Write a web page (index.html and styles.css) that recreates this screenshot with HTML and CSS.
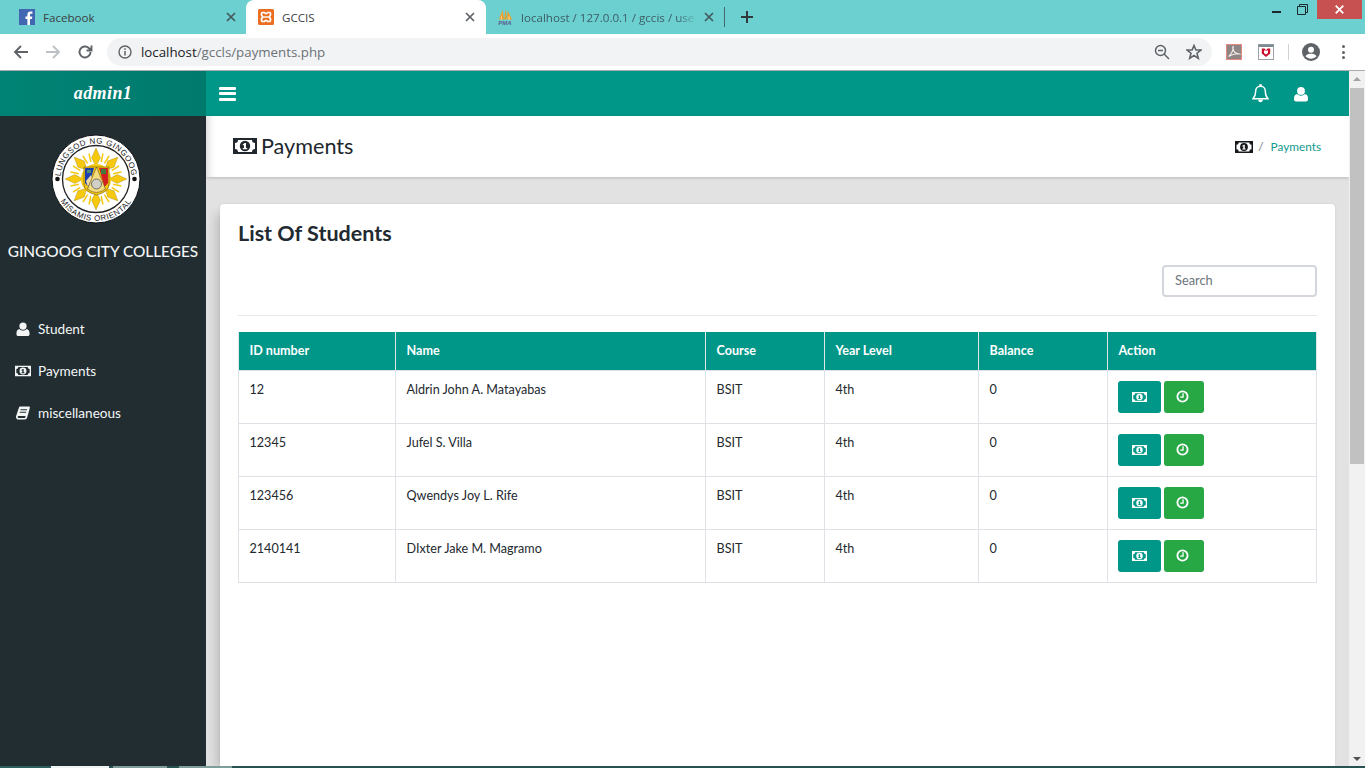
FILE: index.html
```html
<!DOCTYPE html>
<html lang="en">
<head>
<meta charset="utf-8">
<title>GCCIS</title>
<link rel="stylesheet" href="styles.css">
</head>
<body>
<svg class="defs" width="0" height="0" aria-hidden="true">
  <defs>
    <symbol id="i-money" viewBox="0 0 24 16"><path fill="currentColor" fill-rule="evenodd" d="M0 0H24V16H0ZM5 2H19A3 3 0 0 0 22 5V11A3 3 0 0 0 19 14H5A3 3 0 0 0 2 11V5A3 3 0 0 0 5 2ZM12 2.8a5.2 5.2 0 1 0 0 10.400a5.200 5.200 0 1 0 0-10.400ZM11.800 5L9.800 6.300V7.500L11 6.900V10H9.800V11.300H14.200V10H13V5Z"/></symbol>
    <symbol id="i-user" viewBox="0 0 14 15"><path fill="currentColor" d="M7 0.500a3.900 3.900 0 1 1 0 7.800a3.900 3.900 0 1 1 0-7.800ZM3.200 7.600C4.200 8.700 5.500 9.200 7 9.200S9.800 8.700 10.800 7.600C12.700 7.900 14 9.400 14 11.800V13C14 14 13.200 15 12 15H2C.8 15 0 14 0 13V11.800C0 9.400 1.300 7.900 3.200 7.600Z"/></symbol>
    <symbol id="i-book" viewBox="0 0 14 14"><path fill="currentColor" d="M4 .5H13C13.800.5 14 1.200 13.800 1.900L11.300 11C11 12.200 10.200 13.500 8.800 13.500H2.500C1 13.500 0 12.400 0 10.900C0 10.400.1 10 .3 9.500L3 1.500C3.200.9 3.500.5 4 .5ZM4.700 3.200L4.400 4.200H10.800L11.100 3.200ZM3.900 5.700L3.600 6.700H10L10.300 5.700ZM2.600 10C2 10 1.700 10.400 1.700 10.900C1.700 11.500 2.100 11.900 2.700 11.900H9C9.300 11.200 9.400 10.600 9.600 10Z"/></symbol>
    <symbol id="i-bell" viewBox="0 0 16 18"><path fill="none" stroke="currentColor" stroke-width="1.400" d="M8 2.200C5.200 2.200 3.400 4.300 3.400 7C3.400 10.800 2.400 12.400 .9 14H15.100C13.600 12.400 12.600 10.800 12.600 7C12.600 4.300 10.800 2.200 8 2.200Z"/><path fill="currentColor" d="M6.800.3h2.400v2h-2.400ZM5.800 14.800h4.400a2.200 2.600 0 0 1-4.400 0Z"/></symbol>
    <symbol id="i-clock" viewBox="0 0 14 14"><circle cx="7" cy="7" r="5.500" fill="none" stroke="currentColor" stroke-width="2"/><path fill="none" stroke="currentColor" stroke-width="1.400" d="M7.600 3.500V7.700H4.500"/></symbol>
    <g id="seal-ray">
      <path fill="#f6c80e" stroke="#8f7a12" stroke-width=".35" d="M45 14L49.500 24L45 32L40.500 24Z"/>
      <path fill="none" stroke="#f6c80e" stroke-width="1.500" d="M38 19.500L39.800 28M52 19.500L50.200 28"/>
    </g>
  </defs>
</svg>

<header class="chrome">
  <div class="tabstrip">
    <div class="tab tab-fb">
      <svg class="fav" viewBox="0 0 16 16"><rect width="16" height="16" fill="#4267b2"/><path fill="#fff" d="M11 16V10h2l.3-2.500H11V6c0-.8.300-1.200 1.200-1.200h1.200V2.600C13 2.500 12.300 2.500 11.500 2.500 9.600 2.500 8.400 3.600 8.400 5.700v1.800H6.500V10h1.900v6Z"/></svg>
      <span class="tab-label">Facebook</span>
      <svg class="close" viewBox="0 0 10 10"><path d="M1 1L9 9M9 1L1 9"/></svg>
    </div>
    <div class="tab tab-active">
      <svg class="fav" viewBox="0 0 16 16"><rect width="16" height="16" rx="1.500" fill="#ea6d20"/><path fill="none" stroke="#fff" stroke-width="1.600" d="M4 3.500H6.500C7 5 9 5 9.500 3.500H12C13 5 13 6.500 11 8C13 9.500 13 11 12 12.500H9.500C9 11 7 11 6.500 12.500H4C3 11 3 9.500 5 8C3 6.500 3 5 4 3.500Z"/><path stroke="#fff" stroke-width="1.400" d="M6 8H10"/></svg>
      <span class="tab-label">GCCIS</span>
      <svg class="close" viewBox="0 0 10 10"><path d="M1 1L9 9M9 1L1 9"/></svg>
    </div>
    <div class="tab tab-pma">
      <svg class="fav fav-pma" viewBox="0 0 16 16"><path fill="#f29a1f" d="M5.500 1L7 10.500H2ZM8.500 0L9.800 10.500H7.300ZM10.500 1.500L15 10.500H10.300Z"/><path fill="#fbd28a" d="M4.500 5L5.200 10.500H3.500ZM12 6L13 10.500H11Z"/><text class="pma-text" x="8" y="15.500">PMA</text></svg>
      <span class="tab-label tab-fade">localhost / 127.0.0.1 / gccis / use</span>
      <svg class="close" viewBox="0 0 10 10"><path d="M1 1L9 9M9 1L1 9"/></svg>
    </div>
    <span class="tab-sep"></span>
    <svg class="newtab" viewBox="0 0 12 12"><path d="M6 0V12M0 6H12"/></svg>
    <div class="winctl">
      <span class="win-min"></span>
      <svg class="win-max" viewBox="0 0 11 11"><path d="M2.500 2.500V.5H10.500V8.500H8.500M.5 2.500H8.500V10.500H.5Z"/></svg>
      <span class="win-close"><svg viewBox="0 0 9 9"><path d="M.7.7L8.300 8.300M8.300.7L.7 8.300"/></svg></span>
    </div>
  </div>
  <div class="toolbar">
    <svg class="nav-ic" viewBox="0 0 16 16"><path d="M15 8H2M8 2L2 8L8 14"/></svg>
    <svg class="nav-ic nav-off" viewBox="0 0 16 16"><path d="M1 8H14M8 2L14 8L8 14"/></svg>
    <svg class="nav-ic" viewBox="0 0 16 16"><path d="M13.500 8a5.500 5.500 0 1 1-1.700-4L14 6M14.500 1.500V6.500H9.500" /></svg>
    <div class="omnibox">
      <svg class="info" viewBox="0 0 14 14"><circle cx="7" cy="7" r="6" fill="none" stroke="#5f6368" stroke-width="1.400"/><path stroke="#5f6368" stroke-width="1.500" d="M7 6V10.500M7 3.300V4.800"/></svg>
      <span class="url"><span class="url-host">localhost</span>/gccls/payments.php</span>
      <svg class="omni-ic zoom-ic" viewBox="0 0 16 16"><circle cx="6.500" cy="6.500" r="5"/><path d="M10.300 10.300L15 15M4 6.500H9"/></svg>
      <svg class="omni-ic star-ic" viewBox="0 0 16 16"><path d="M8 1.500L9.900 6H14.900L11 9.200L12.300 14.300L8 11.500L3.700 14.300L5 9.200L1.100 6H6.100Z"/></svg>
    </div>
    <svg class="ext ext-pdf" viewBox="0 0 16 16"><rect x=".5" y=".5" width="15" height="15" fill="#8f8584" stroke="#e38a80"/><path fill="none" stroke="#efeaea" stroke-width="1.100" d="M2.500 12.500C5 11 7.500 6 7.300 3C7.200 1.800 6.300 2.500 7 5C8 8 10 10 13.500 10C12 9 7 10 2.500 12.500Z"/></svg>
    <svg class="ext ext-mc" viewBox="0 0 16 16"><rect x=".5" y=".5" width="15" height="15" fill="#fff" stroke="#9aa0a6"/><rect x=".5" y=".5" width="15" height="2.500" fill="#7d8a91"/><path fill="#c8102e" d="M3.800 4.500H6.500L8 6.200L9.500 4.500H12.200V9.500L8 13L3.800 9.500Z"/><path fill="#fff" d="M6 6.500H10V9L8 10.500L6 9Z"/></svg>
    <span class="tool-sep"></span>
    <svg class="avatar" viewBox="0 0 18 18"><circle cx="9" cy="9" r="9" fill="#5f6368"/><circle cx="9" cy="6.800" r="3" fill="#fff"/><path fill="#fff" d="M3.500 13.300C4.500 11.300 7 10.700 9 10.700S13.500 11.300 14.500 13.300C13 15 11 15.700 9 15.700S5 15 3.500 13.300Z"/></svg>
    <span class="kebab"><i></i><i></i><i></i></span>
  </div>
</header>

<div class="viewport">
  <div class="app">
    <div class="topbar">
      <div class="brand">admin1</div>
      <div class="topbar-main">
        <span class="burger"><i></i><i></i><i></i></span>
        <svg class="top-ic bell"><use href="#i-bell"/></svg>
        <svg class="top-ic usr"><use href="#i-user"/></svg>
      </div>
    </div>
    <div class="body-row">
      <aside class="sidebar">
        <svg class="seal" viewBox="0 0 90 90">
          <defs>
            <path id="seal-top" d="M9.500 45a35.500 35.500 0 0 1 71 0"/>
            <path id="seal-bot" d="M3 45a42 42 0 0 0 84 0"/>
          </defs>
          <circle cx="45" cy="45" r="44" fill="#fff" stroke="#0d1114" stroke-width="1"/>
          <circle cx="45" cy="45" r="33.500" fill="#fff" stroke="#222" stroke-width="1.300"/>
          <circle cx="6.500" cy="45" r="2.300" fill="#111"/>
          <circle cx="83.500" cy="45" r="2.300" fill="#111"/>
          <text class="seal-text"><textPath href="#seal-top" startOffset="50%">LUNGSOD NG GINGOOG</textPath></text>
          <text class="seal-text"><textPath href="#seal-bot" startOffset="50%">MISAMIS ORIENTAL</textPath></text>
          <use href="#seal-ray"/>
          <use href="#seal-ray" transform="rotate(45 45 45)"/>
          <use href="#seal-ray" transform="rotate(90 45 45)"/>
          <use href="#seal-ray" transform="rotate(135 45 45)"/>
          <use href="#seal-ray" transform="rotate(180 45 45)"/>
          <use href="#seal-ray" transform="rotate(225 45 45)"/>
          <use href="#seal-ray" transform="rotate(270 45 45)"/>
          <use href="#seal-ray" transform="rotate(315 45 45)"/>
          <circle cx="45" cy="45" r="15" fill="#f6c80e"/>
          <path fill="#f6c80e" stroke="#6e5a12" stroke-width=".6" d="M33 33H58V50Q58 58 45.500 61Q33 58 33 50Z"/>
          <path fill="#1c3fb0" d="M34 34H43L37.500 53L34 49Z"/>
          <path fill="#d31f1f" d="M48 34H57V49L53.500 53Z"/>
          <path fill="#efd9a6" d="M35 47L40 41L41 44L37 53Z"/>
          <path fill="#3f7a3d" d="M50 35h5v5h-5Z"/>
          <path fill="#4f8a72" d="M36 36h4v3h-4Z"/>
          <path fill="#f4dd7c" stroke="#44391a" stroke-width=".5" d="M45.500 33L54.500 55Q45.500 62 36.500 55Z"/>
          <circle cx="45.500" cy="50" r="5" fill="#d2cfc6" stroke="#555" stroke-width=".8"/>
        </svg>
        <div class="college">GINGOOG CITY COLLEGES</div>
        <nav class="side-nav">
          <a class="side-link"><svg class="side-ic"><use href="#i-user"/></svg>Student</a>
          <a class="side-link"><svg class="side-ic"><use href="#i-money"/></svg>Payments</a>
          <a class="side-link"><svg class="side-ic"><use href="#i-book"/></svg>miscellaneous</a>
        </nav>
      </aside>
      <main class="content">
        <div class="page-head">
          <h1 class="page-title"><svg class="title-ic"><use href="#i-money"/></svg>Payments</h1>
          <div class="crumbs">
            <svg class="crumb-ic"><use href="#i-money"/></svg>
            <span class="crumb-sep">/</span>
            <a class="crumb-link">Payments</a>
          </div>
        </div>
        <section class="card">
          <h2 class="card-title">List Of Students</h2>
          <div class="search-row"><input class="search" type="text" placeholder="Search"></div>
          <hr class="rule">
          <table class="students">
            <colgroup>
              <col class="c1"><col class="c2"><col class="c3"><col class="c4"><col class="c5"><col class="c6">
            </colgroup>
            <thead>
              <tr><th>ID number</th><th>Name</th><th>Course</th><th>Year Level</th><th>Balance</th><th>Action</th></tr>
            </thead>
            <tbody>
              <tr><td>12</td><td>Aldrin John A. Matayabas</td><td>BSIT</td><td>4th</td><td>0</td><td><span class="btn btn-pay"><svg class="btn-ic-m"><use href="#i-money"/></svg></span><span class="btn btn-time"><svg class="btn-ic-c"><use href="#i-clock"/></svg></span></td></tr>
              <tr><td>12345</td><td>Jufel S. Villa</td><td>BSIT</td><td>4th</td><td>0</td><td><span class="btn btn-pay"><svg class="btn-ic-m"><use href="#i-money"/></svg></span><span class="btn btn-time"><svg class="btn-ic-c"><use href="#i-clock"/></svg></span></td></tr>
              <tr><td>123456</td><td>Qwendys Joy L. Rife</td><td>BSIT</td><td>4th</td><td>0</td><td><span class="btn btn-pay"><svg class="btn-ic-m"><use href="#i-money"/></svg></span><span class="btn btn-time"><svg class="btn-ic-c"><use href="#i-clock"/></svg></span></td></tr>
              <tr><td>2140141</td><td>DIxter Jake M. Magramo</td><td>BSIT</td><td>4th</td><td>0</td><td><span class="btn btn-pay"><svg class="btn-ic-m"><use href="#i-money"/></svg></span><span class="btn btn-time"><svg class="btn-ic-c"><use href="#i-clock"/></svg></span></td></tr>
            </tbody>
          </table>
        </section>
      </main>
    </div>
  </div>
  <div class="scrollbar">
    <span class="arrow-up"></span>
    <span class="thumb"></span>
    <span class="arrow-down"></span>
  </div>
</div>

<footer class="taskstrip">
  <i class="ts ts-a"></i><i class="ts ts-b"></i><i class="ts ts-c"></i><i class="ts ts-d"></i>
</footer>
</body>
</html>
```

FILE: styles.css
```css
* { box-sizing: border-box; }
html, body { margin: 0; height: 100%; overflow: hidden; }
body {
  width: 1365px;
  height: 768px;
  display: flex;
  flex-direction: column;
  font-family: Lato, "Liberation Sans", sans-serif;
  color: #212529;
  background: #fff;
}
.defs { position: absolute; }

/* browser chrome */
.chrome { flex: none; height: 71px; border-bottom: 1px solid #a9adb0; font-family: "Open Sans", "Noto Sans", sans-serif; }
.tabstrip { height: 34px; background: #6bd0cf; display: flex; align-items: center; }
.tab { height: 34px; display: flex; align-items: center; position: relative; flex: none; }
.tab-fb { width: 246px; padding: 0 10px 0 19px; }
.tab-active { width: 240px; background: #fff; border-radius: 8px 8px 0 0; padding: 0 11px 0 12px; }
.tab-pma { width: 238px; padding: 0 10px 0 11px; }
.fav { width: 16px; height: 16px; flex: none; margin-right: 8px; }
.fav-pma { margin-right: 8px; }
.pma-text { font: italic 700 6px "Liberation Sans", sans-serif; fill: #5a5f8f; text-anchor: middle; }
.tab-label { font-size: 11.600px; color: #3c4043; flex: 1; white-space: nowrap; min-width: 0; }
.tab-fade { color: #3f5d66; -webkit-mask-image: linear-gradient(90deg, #000 88%, transparent); mask-image: linear-gradient(90deg, #000 88%, transparent); }
.close { width: 10px; height: 10px; flex: none; margin-left: 6px; }
.close path { stroke: #45595c; stroke-width: 1.700; fill: none; }
.tab-active .close path { stroke: #5f6368; }
.tab-sep { width: 1px; height: 20px; background: #44696b; flex: none; }
.newtab { width: 12px; height: 12px; margin-left: 16px; flex: none; }
.newtab path { stroke: #2f3a3c; stroke-width: 2; fill: none; }
.winctl { margin-left: auto; align-self: flex-start; display: flex; align-items: flex-start; }
.win-min { width: 9px; height: 2px; background: #1d2a2c; margin: 11px 16px 0 0; }
.win-max { width: 11px; height: 11px; margin: 4px 9px 0 0; overflow: visible; }
.win-max path { fill: none; stroke: #1d2a2c; stroke-width: 1; }
.win-close { width: 45px; height: 19px; background: #c75050; display: flex; align-items: center; justify-content: center; margin-right: 3px; }
.win-close svg { width: 9px; height: 9px; }
.win-close path { stroke: #fff; stroke-width: 1.700; fill: none; }

.toolbar { height: 36px; background: #fff; display: flex; align-items: center; }
.nav-ic { width: 16px; height: 16px; margin-left: 13px; flex: none; }
.nav-ic + .nav-ic { margin-left: 16px; }
.nav-ic path { fill: none; stroke: #5f6368; stroke-width: 1.900; }
.nav-off path { stroke: #bdc1c6; }
.omnibox { margin-left: 14px; width: 1105px; height: 28px; border-radius: 14px; background: #f1f3f4; display: flex; align-items: center; padding: 0 10px 0 11px; flex: none; }
.info { width: 14px; height: 14px; flex: none; margin-right: 9px; }
.url { font-size: 13.300px; color: #6c7278; flex: 1; white-space: nowrap; }
.url-host { color: #202124; }
.omni-ic { width: 16px; height: 16px; flex: none; }
.omni-ic circle, .omni-ic path { fill: none; stroke: #5f6368; stroke-width: 1.500; }
.zoom-ic { margin-right: 16px; }
.star-ic path { stroke-width: 1.600; }
.ext { width: 16px; height: 16px; flex: none; }
.ext-pdf { margin-left: 14px; }
.ext-mc { margin-left: 16px; }
.tool-sep { width: 1px; height: 16px; background: #d0d3d6; margin: 0 13px 0 14px; flex: none; }
.avatar { width: 18px; height: 18px; flex: none; }
.kebab { display: flex; flex-direction: column; gap: 2.500px; margin-left: 22px; flex: none; }
.kebab i { width: 3px; height: 3px; border-radius: 50%; background: #5f6368; display: block; }

/* page */
.viewport { flex: 1; min-height: 0; display: flex; }
.app { flex: 1; min-width: 0; display: flex; flex-direction: column; }
.topbar { flex: none; height: 45px; display: flex; background: #009688; color: #fff; }
.brand { width: 206px; flex: none; background: linear-gradient(90deg, #008374, #007a6d); display: flex; align-items: center; justify-content: center; font-family: "Liberation Serif", serif; font-style: italic; font-weight: 700; font-size: 18px; letter-spacing: .4px; }
.topbar-main { flex: 1; display: flex; align-items: center; padding: 0 41px 0 13px; }
.burger { display: flex; flex-direction: column; gap: 2.500px; width: 17px; margin-right: auto; }
.burger i { display: block; height: 3px; background: #fff; border-radius: 1px; }
.top-ic { display: block; color: #fff; }
.bell { width: 17px; height: 19px; }
.usr { width: 14px; height: 16px; margin-left: 25px; }

.body-row { flex: 1; min-height: 0; display: flex; }
.sidebar { width: 206px; flex: none; background: #222d32; color: #fff; display: flex; flex-direction: column; align-items: stretch; padding-top: 18px; }
.seal { width: 90px; height: 90px; align-self: center; margin-right: 14px; flex: none; display: block; }
.seal-text { font-family: "Liberation Sans", sans-serif; font-size: 8px; letter-spacing: .6px; fill: #222; text-anchor: middle; }
.college { font-size: 15.400px; font-weight: 500; text-align: center; margin-top: 17px; color: #f2f4f4; white-space: nowrap; line-height: 20px; }
.side-nav { margin-top: 58px; display: flex; flex-direction: column; gap: 22px; }
.side-link { display: flex; align-items: center; height: 20px; padding-left: 15px; font-size: 13.600px; color: #f4f6f6; }
.side-ic { width: 16px; height: 14px; margin-right: 7px; color: #f4f6f6; flex: none; }

.content { flex: 1; min-width: 0; background: #e2e2e2; display: flex; flex-direction: column; }
.page-head { flex: none; height: 61px; background: #fff; box-shadow: 0 1px 3px rgba(0,0,0,.18), inset 10px 0 8px -8px #d4d4d4; display: flex; align-items: center; justify-content: space-between; padding: 0 28px 2px 27px; position: relative; }
.page-title { margin: 0; font-size: 21.600px; font-weight: 400; color: #20272d; display: flex; align-items: center; line-height: 26px; }
.title-ic { width: 24px; height: 16px; margin-right: 4px; color: #20272d; }
.crumbs { display: flex; align-items: center; font-size: 11.800px; padding-top: 2px; }
.crumb-ic { width: 18px; height: 12px; color: #15191c; margin-right: 5px; }
.crumb-sep { color: #6c757d; margin-right: 7px; }
.crumb-link { color: #0f9a8e; }
.card { flex: 1; min-height: 0; margin: 27px 14px 0 14px; background: #fff; border-radius: 4px 4px 0 0; padding: 15px 18px 0; box-shadow: 0 0 3px rgba(0,0,0,.08), -8px 6px 10px -4px rgba(0,0,0,.16); }
.card-title { margin: 0; font-size: 21.500px; font-weight: 700; line-height: 28px; color: #212a30; }
.search-row { display: flex; justify-content: flex-end; margin-top: 18px; }
.search { width: 155px; height: 32px; border: 2px solid #d3d7dd; border-radius: 4px; padding: 0 11px 3px; font: 12.800px Lato, sans-serif; color: #495057; background: #fff; outline: none; }
.search::placeholder { color: #6c757d; opacity: 1; }
.rule { border: 0; border-top: 1px solid #e6e8eb; margin: 18px 0 16px; }
.students { width: 1078px; border-collapse: collapse; table-layout: fixed; font-size: 12.600px; }
.c1 { width: 157px; } .c2 { width: 310px; } .c3 { width: 119px; } .c4 { width: 154px; } .c5 { width: 129px; } .c6 { width: 209px; }
.students th { background: #009688; color: #fff; text-align: left; font-weight: 700; height: 38px; padding: 0 10px 0 10.500px; border: 1px solid #dee2e6; border-width: 0 1px; border-left-color: #dfe8e7; border-right-color: #dfe8e7; }
.students td { height: 53px; padding: 10px 10px 0 10.500px; vertical-align: top; border: 1px solid #dee2e6; color: #23292e; line-height: 17px; }
.students td:last-child { padding: 10px 0 0 10px; }
.btn { display: inline-flex; align-items: center; justify-content: center; height: 32px; border-radius: 3px; color: #fff; vertical-align: top; }
.btn-pay { width: 43px; background: #009688; margin-right: 3px; }
.btn-time { width: 40px; background: #28a745; padding-right: 4px; }
.btn-ic-m { width: 15px; height: 10px; }
.btn-ic-c { width: 13px; height: 13px; }

.scrollbar { width: 16px; flex: none; background: #f1f1f1; display: flex; flex-direction: column; align-items: center; position: relative; }
.arrow-up { margin-top: 6px; border: 4px solid transparent; border-top: 0; border-bottom: 4px solid #a3a3a3; width: 0; height: 0; flex: none; }
.thumb { width: 14px; height: 376px; background: #c1c1c1; margin-top: 7px; flex: none; }
.arrow-down { margin-top: auto; margin-bottom: 5px; border: 4px solid transparent; border-bottom: 0; border-top: 4px solid #505050; width: 0; height: 0; flex: none; }

.taskstrip { flex: none; height: 2px; background: #27524f; display: flex; }
.ts { display: block; height: 2px; }
.ts-a { width: 51px; background: #2f5f5c; }
.ts-b { width: 58px; background: #eef4f3; }
.ts-c { width: 54px; margin-left: 4px; background: #7f9e9b; }
.ts-d { width: 53px; margin-left: 12px; background: #7f9e9b; }
```
